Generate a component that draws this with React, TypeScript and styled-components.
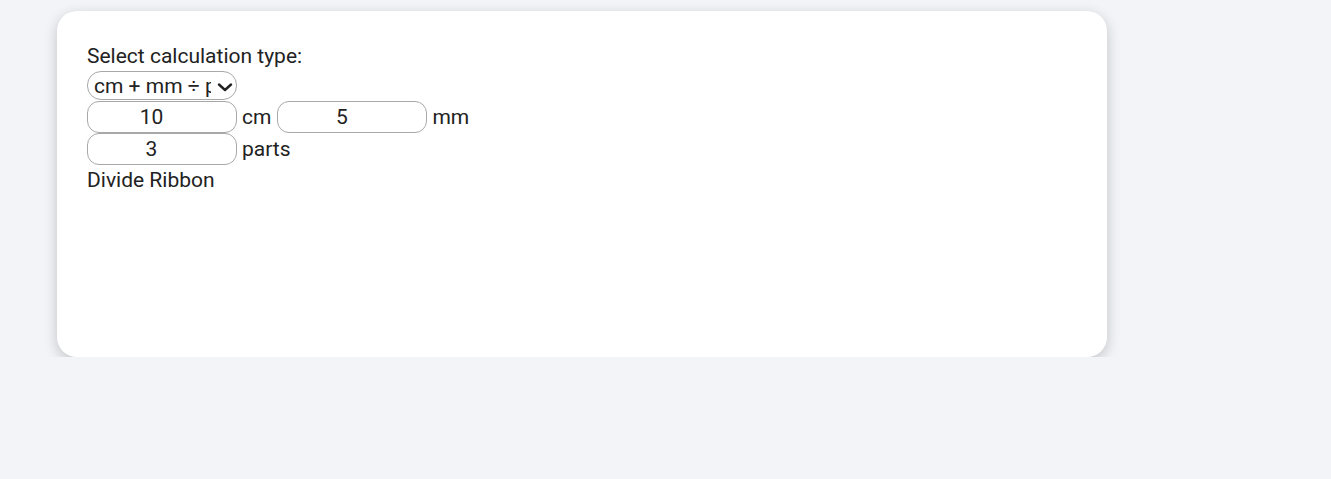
import React from "react";
import styled, { createGlobalStyle } from "styled-components";

const Global = createGlobalStyle`
  html, body { margin: 0; padding: 0; background: #f3f4f8; }
  body { font-family: Roboto, "Liberation Sans", sans-serif; color: #222; }
`;

const Page = styled.div`
  padding: 11px 0 0 57px;
`;

const Card = styled.div`
  box-sizing: border-box;
  width: 1050px;
  height: 346px;
  background: #fff;
  border-radius: 20px;
  box-shadow: 0 4px 14px rgba(0, 0, 0, 0.2);
  padding: 33px 30px 30px;
  display: flex;
  flex-direction: column;
  align-items: flex-start;
  font-size: 21px;
`;

const Label = styled.label`
  display: block;
  line-height: 25px;
  height: 25px;
`;

const SelectWrap = styled.div`
  position: relative;
  margin-top: 2px;
  width: 150px;
  height: 29px;
`;

const Select = styled.select`
  box-sizing: border-box;
  appearance: none;
  -webkit-appearance: none;
  width: 150px;
  height: 29px;
  border: 1px solid #a8a8a8;
  border-radius: 14px;
  background: #fff;
  font-family: inherit;
  font-size: 21px;
  color: #222;
  padding: 0 25px 0 6px;
  margin: 0;
`;

const Chevron = styled.svg`
  position: absolute;
  right: 4px;
  top: 12px;
  width: 16px;
  height: 9px;
  pointer-events: none;
`;

const Row = styled.div<{ $mt?: number }>`
  display: flex;
  align-items: center;
  height: 32px;
  margin-top: ${(p) => p.$mt ?? 0}px;
`;

const Input = styled.input`
  box-sizing: border-box;
  width: 150px;
  height: 32px;
  border: 1px solid #a8a8a8;
  border-radius: 12px;
  text-align: center;
  font-family: inherit;
  font-size: 21px;
  color: #222;
  padding: 0 8px 0 2px;
  margin: 0;
`;

const Unit = styled.span`
  padding: 0 6px 0 5px;
  line-height: 25px;
`;

const Action = styled.div`
  margin-top: 3px;
  line-height: 25px;
`;

export default function App() {
  return (
    <>
      <Global />
      <Page>
        <Card>
          <Label htmlFor="calc">Select calculation type:</Label>
          <SelectWrap>
            <Select id="calc" defaultValue="a">
              <option value="a">cm + mm ÷ parts</option>
              <option value="b">cm ÷ parts</option>
            </Select>
            <Chevron viewBox="0 0 16 9" fill="none">
              <path d="M2 1.5 L8 7 L14 1.5" stroke="#222" strokeWidth="2.4" strokeLinecap="round" strokeLinejoin="round" />
            </Chevron>
          </SelectWrap>
          <Row $mt={1}>
            <Input type="number" defaultValue="10" />
            <Unit>cm</Unit>
            <Input type="number" defaultValue="5" />
            <Unit>mm</Unit>
          </Row>
          <Row>
            <Input type="number" defaultValue="3" />
            <Unit>parts</Unit>
          </Row>
          <Action>Divide Ribbon</Action>
        </Card>
      </Page>
    </>
  );
}
